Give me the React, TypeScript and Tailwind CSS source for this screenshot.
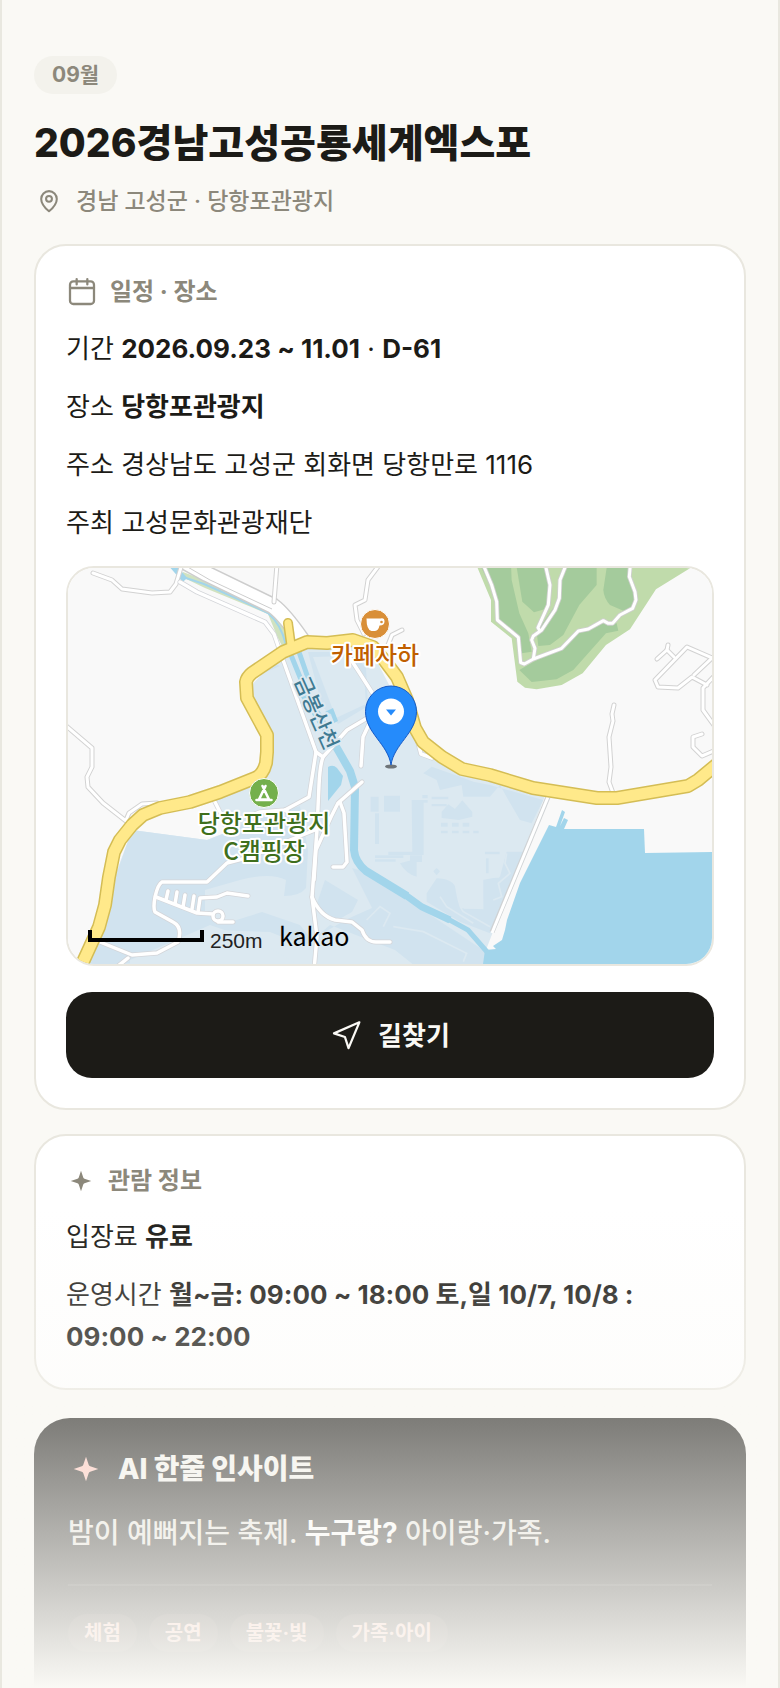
import type { ReactNode } from "react";

const TAGS = ["체험", "공연", "불꽃·빛", "가족·아이"];

// yellow trunk road that crosses the whole map
const MAIN_ROAD =
  "M78 972L83 962L99 927L105 905L109 877L114 852L120 840L132 825L143 815L160 808L190 802L220 792L255 778Q263 775 266 763L267 752V735L247 698L246 682Q247 677 252 673L283 652L307 642L327 643L353 640L373 647L385 661L397 677L407 700L415 728L423 742L442 757L462 769L490 775L533 788L597 798H617L688 786L698 780L722 760";

// small streets outside of the resort
const STREETS = [
  "M93 573L112 580L122 589L137 591L152 593L170 592L176 584L182 564",
  "M64 724L92 748V767L87 777L88 787L103 803L126 821",
  "M126 820L129 813L142 804L157 803",
  "M277 564L274 602",
  "M380 564L368 580L365 600L355 605L357 620L364 634",
  "M388 645L392 635L402 630",
  "M668 645L667 650L657 659",
  "M667 650L674 657",
  "M720 661L712 658L687 647L655 680L658 687L678 688L692 677L707 685",
  "M694 675L712 658",
  "M720 670L703 688V710L716 728",
  "M702 734L693 737V747L702 756L716 750",
  "M614 705L612 714L613 721L609 737L611 767L609 782L613 793",
];

// lanes inside of the resort
const LANES = [
  "M180 582L197 592L265 622L274 634L282 657L316 752L323 757L347 730L369 717",
  "M316 752L309 797L285 810L260 812L247 817",
  "M213 798L220 812",
  "M285 810L292 815",
  "M323 757Q320 765 319 785L317 830L312 897L317 937L314 970",
  "M314 880L316 850L331 817L338 803L362 782",
  "M340 802L344 813L347 862L343 867H333",
  "M312 897Q320 916 335 920L352 922L362 930Q366 942 376 942L390 942",
  "M361 766L363 737L370 722",
  "M348 655L375 697",
  "M407 720L416 735L421 754L432 758",
  "M315 830L290 840L250 857L227 863L207 882H162Q158 884 155 897Q153 908 155 912L173 922Q183 927 178 942L157 953L132 955L100 942",
  "M156 897L197 913L213 914",
  "M198 912L200 898L217 897L227 893L248 896",
  "M168 891L166 900",
  "M177 892L175 904",
  "M185 895L183 907",
  "M194 896L192 909",
  "M218 922L233 922",
  "M118 966L128 958",
];

function PinIcon() {
  return (
    <svg viewBox="0 0 24 24" className="size-[26px]" fill="none" stroke="currentColor" strokeWidth="1.9" strokeLinejoin="round" aria-hidden="true">
      <path d="M12 21.5s-7.2-6-7.2-11.4a7.2 7.2 0 0 1 14.4 0C19.200 15.500 12 21.500 12 21.500z" />
      <circle cx="12" cy="10" r="2.700" />
    </svg>
  );
}

function CalendarIcon() {
  return (
    <svg viewBox="0 0 24 24" className="size-8" fill="none" stroke="currentColor" strokeWidth="1.700" strokeLinecap="round" strokeLinejoin="round" aria-hidden="true">
      <rect x="3" y="4" width="18" height="17" rx="2.500" />
      <path d="M3 9h18M8 2.300v4M16 2.300v4" />
    </svg>
  );
}

function Sparkle({ className }: { className: string }) {
  return (
    <svg viewBox="0 0 24 24" className={className} fill="currentColor" aria-hidden="true">
      <path d="M12 3.800l1.800 5.400a1.600 1.600 0 0 0 1 1L20.200 12l-5.400 1.800a1.600 1.600 0 0 0-1 1L12 20.200l-1.800-5.400a1.600 1.600 0 0 0-1-1L3.800 12l5.400-1.800a1.600 1.600 0 0 0 1-1z" />
    </svg>
  );
}

function NavigationIcon() {
  return (
    <svg viewBox="0 0 24 24" className="size-8" fill="none" stroke="currentColor" strokeWidth="1.700" strokeLinejoin="round" aria-hidden="true">
      <path d="M22 2.500L3 10.800l8.200 2.700 2.700 8.300z" />
    </svg>
  );
}

function Hill() {
  return (
    <g transform="translate(390 560) scale(0.3333)">
      <path fill="#c0dbab" d="M255 0L262 22L303 120V185L365 235L382 365L405 383L440 388L515 375L578 340L648 255L720 208L798 88L940 0z" />
      <g fill="#a4cb9c">
        <path d="M268 10H363L365 60L388 160L415 220L425 275L395 280L385 230L325 185L320 120z" />
        <path d="M378 10H468L480 75L475 145L432 157L397 125z" />
        <path d="M525 10H620V75L568 135L520 225L480 255L445 258L440 215L500 130L510 60z" />
        <path d="M652 10H720L722 50L738 95L725 145L700 152L660 135Q642 115 640 90z" />
        <path d="M388 330L440 300L515 265L565 215L640 190L680 190L685 212L648 220L550 330L500 358L425 366z" />
      </g>
      {["#cfcfcf", "#fff"].map((color, i) => (
        <g key={color} fill="none" stroke={color} strokeWidth={i ? 9 : 14} strokeLinejoin="round">
          <path d="M276 5L305 75L320 125L322 180L385 232L392 308L403 312L430 297L515 265L565 213L595 207L640 182L655 190H668L690 165L728 145L738 120L735 95L718 50L722 5" />
          <path d="M430 297L435 265L425 240L430 228L455 210L495 150L508 115L510 60L530 10" />
          <path d="M450 213L444 203L475 135L480 75L465 10" />
        </g>
      ))}
    </g>
  );
}

function Resort() {
  return (
    <g>
      <path fill="#dce9f1" d="M132 830L207 840L225 833L213 798L262 770L267 735L247 690L283 652L310 644L370 648L415 735L462 769L545 796L486 950L484 970H80z" />
      <path fill="#d1e3ef" d="M132 830L207 840L225 833L236 826L300 806L308 850L306 888Q300 896 284 896L286 880Q270 872 240 880L205 890V915L230 922L262 912L300 925L312 940L345 920L372 908L352 868L366 872L486 952L484 970H420L395 950L330 925L305 946L270 932L215 930L150 962L84 966z" />
      <path fill="#dce9f1" d="M130 960L210 925L260 942L300 966H130z" />
      <path fill="#d1e3ef" d="M308 652L352 652L366 668L368 706L338 724L322 706z" />
      <path fill="#dce9f1" d="M313 657L346 656L364 676L366 704L336 718z" />
      <path fill="#d1e3ef" d="M247 675L270 662L280 666L252 678z" />
      <path fill="#d1e3ef" d="M325 880L358 900L352 912L334 922L316 906zM375 905L396 912L388 932L366 930z" />
      <g transform="translate(260 780) scale(0.3333)">
        <g fill="#d1e3ef">
          <path d="M490-20L515-40L600-10L640 5L690 15L850 60L815 130L780 120L745 60L720 15L690 50L610 50L605 15L540 30L530 0z" />
          <path d="M332 50h24v45h-24zM372 47h48v48h-48zM345 100h12v92h-12zM455 60h36v165H385v-10h72z" />
          <path d="M345 226h85v8h-85zM345 238h62v7h-62zM450 226h36v20h-36zM420 250l50-14v54q-30-6-50-40z" />
          <path d="M487 45h16v10h-16zM487 60h16v8h-16zM515 50h50v8h-50zM515 72h45v7h-45zM545 95l20-22 20 14 22-26 30 35v14l-40 10-52-6z" />
          <path d="M543 128h20v12h-20zM576 128h20v12h-20zM608 128h20v12h-20zM543 152h20v8h-20zM576 152h20v8h-20zM608 152h20v8h-20zM640 152h16v8h-16z" />
          <path d="M530 264l10 10-10 12-10-12zM675 215h44v8h-44zM678 235h8v45h-8z" />
          <path d="M500 340L530 295Q580 295 590 330L600 385L670 388L668 300L720 290L740 215L800 215L690 460L600 425L500 365z" />
        </g>
        <g fill="none" stroke="#dce9f1" strokeWidth="5">
          <path d="M585 300Q595 380 610 395L690 440M740 220L735 250L750 280L715 310L725 350L700 360M540 350L560 380L640 430" />
          <path d="M305 245L355 280M415 320L480 358M400 440L490 455L620 520L610 545M320 420L360 380L390 400L370 440" />
        </g>
        <path fill="#dce9f1" d="M612 300h58v86h-58zM688 225h30v68h-30z" />
      </g>
    </g>
  );
}

function Water() {
  return (
    <g>
      <g fill="#a2d5eb">
        <path d="M549 825L556 827L562 810L565 812L560 826L564 818L568 820L564 829H644L645 853L720 852V972H483V964L485 950L496 949L493 946L502 940L505 930L507 920L520 883L533 857z" />
        <path d="M328 767Q333 764 337 768L343 776L341 785L328 801z" />
        <path d="M325 712L333 708L338 721L334 723L331 714z" />
      </g>
      <g fill="none" stroke="#a2d5eb">
        <path strokeWidth="8" strokeLinejoin="round" d="M296 682L318 716L338 750L350 771L355 787L354 850Q355 862 366 871L407 896" />
        <path strokeWidth="7" d="M404 894L422 907L450 920" />
        <path strokeWidth="5" d="M446 918L468 930L488 953" />
        <path strokeWidth="5" d="M291 655L302 682M299 652L308 678" />
      </g>
    </g>
  );
}

function KakaoMap() {
  return (
    <svg viewBox="68 568 644 396" className="block w-full bg-[#f9f9f9]" role="img" aria-label="당항포관광지 지도">
      <path fill="#d0e2c0" d="M180 576L205 588L268 614L277 636L284 650L288 640L282 620L270 608L215 584L183 572z" />
      <path fill="none" stroke="#a2d5eb" strokeWidth="6" d="M171 564L185 580" />
      <path fill="none" stroke="#a2d5eb" strokeWidth="2" d="M180 576L204 584L238 599L268 613Q281 624 286 645" />
      <Resort />
      <Water />
      <Hill />
      <g fill="none" strokeLinejoin="round">
        <path stroke="#cdcdcd" strokeWidth="17" d="M178 558L207 574L273 606Q284 614 302 640" />
        <path stroke="#fff" strokeWidth="14" d="M178 558L207 574L273 606Q284 614 302 640" />
        <path stroke="#cdcdcd" strokeWidth="1" d="M186 566L210 580L272 609" />
      </g>
      <g fill="none" stroke="#d2d2d2" strokeWidth="5" strokeLinecap="round" strokeLinejoin="round">
        {STREETS.map((d) => <path key={d} d={d} />)}
      </g>
      <g fill="none" stroke="#fff" strokeWidth="3" strokeLinecap="round" strokeLinejoin="round">
        {STREETS.map((d) => <path key={d} d={d} />)}
      </g>
      <g fill="none" stroke="#d3d5d9" strokeWidth="5" strokeLinecap="round" strokeLinejoin="round">
        {LANES.map((d) => <path key={d} d={d} />)}
        <circle cx="218" cy="916" r="5" />
      </g>
      <g fill="none" stroke="#fff" strokeWidth="3.500" strokeLinecap="round" strokeLinejoin="round">
        {LANES.map((d) => <path key={d} d={d} />)}
        <circle cx="218" cy="916" r="5" />
      </g>
      <path fill="none" stroke="#cfd2d4" strokeWidth="5" d="M548 797L492 932" />
      <path fill="none" stroke="#fff" strokeWidth="3" d="M548 797L492 933" />
      <g fill="none" strokeLinejoin="round" strokeLinecap="round">
        <path stroke="#d4bd55" strokeWidth="10" d="M288 623L291 645" />
        <path stroke="#d4bd55" strokeWidth="14" d={MAIN_ROAD} />
        <path stroke="#ffe98a" strokeWidth="11" d={MAIN_ROAD} />
        <path stroke="#ffe98a" strokeWidth="7" d="M288 623L291 645" />
      </g>

      {/* places */}
      <circle cx="375" cy="624" r="14.500" fill="#d98f38" stroke="#fff" />
      <path fill="#fff" d="M366.500 618.500h14q4-1 4 3t-5 4q-1 5-4.500 5.500h-3.500q-5-1-5-12.500z" />
      <circle cx="381.500" cy="622" r="1.300" fill="#d98f38" />
      <circle cx="264" cy="793" r="14.500" fill="#74b04c" stroke="#fff" />
      <path fill="none" stroke="#fff" strokeWidth="2.600" strokeLinejoin="round" strokeLinecap="round" d="M262.500 786L269 799.500H259L265.500 786M256.500 800H271.500" />
      <g className="font-['Noto_Sans_CJK_KR',sans-serif] font-medium" textAnchor="middle" stroke="#fff" strokeWidth="4" strokeLinejoin="round" paintOrder="stroke">
        <text x="375" y="664" fontSize="24" fill="#c05f00">카페자하</text>
        <text x="264" y="832" fontSize="24" fill="#3f6f1c">당항포관광지</text>
        <text x="264" y="860" fontSize="24" fill="#3f6f1c">C캠핑장</text>
        <text x="0" y="7" fontSize="21" fill="#3f7a92" stroke="#dce9f1" transform="translate(316 713) rotate(66)">금봉산천</text>
      </g>

      <ellipse cx="391" cy="766.500" rx="6" ry="2" fill="#000" opacity="0.500" />
      <path fill="#258bfb" stroke="#1559c4" d="M391 765C388 744 365.500 733 365.500 711.500a25.500 25.500 0 0 1 51 0C416.500 733 394 744 391 765z" />
      <circle cx="391" cy="711.500" r="13" fill="#fff" />
      <path fill="#258bfb" d="M386 709.500h10l-5 6z" />

      {/* scale */}
      <path fill="none" stroke="#000" strokeWidth="4" d="M90 930V940H202V930" />
      <text x="210" y="948" fontSize="21" fill="#222" className="font-['Liberation_Sans',sans-serif] font-normal">250m</text>
      <text x="279" y="946" fontSize="25" fill="#000" className="font-['Noto_Sans_CJK_KR',sans-serif] font-normal">kakao</text>
    </svg>
  );
}

function Card({ icon, title, children }: { icon: ReactNode; title: string; children: ReactNode }) {
  return (
    <section className="rounded-[32px] border-2 border-[#e9e7df] bg-white p-[30px]">
      <h2 className="mb-5 flex items-center gap-3 text-[24px] leading-[30px] font-bold text-[#8c887b]">
        {icon}
        {title}
      </h2>
      {children}
    </section>
  );
}

function Row({ label, children }: { label: string; children: ReactNode }) {
  return (
    <p className="text-[26px] leading-[42px]">
      {label} {children}
    </p>
  );
}

export default function App() {
  return (
    <main className="relative h-screen overflow-hidden border-x-2 border-[#e9e8e0] bg-[#faf9f5] px-8 pt-14 font-[Inter,'Noto_Sans_CJK_KR',sans-serif] text-[#1c1b17]">
      <span className="inline-flex h-[38px] items-center rounded-full bg-[#f3f2ec] px-[18px] align-top text-[21px] font-bold text-[#8c887b]">
        09월
      </span>
      <h1 className="mt-6 text-[39px] leading-[50px] font-extrabold">2026경남고성공룡세계엑스포</h1>
      <p className="mt-4 flex items-center gap-[14px] pl-[2px] text-[23px] leading-[34px] font-medium text-[#8c887b]">
        <PinIcon />
        경남 고성군 · 당항포관광지
      </p>

      <div className="mt-[26px] flex flex-col gap-6">
        <Card icon={<CalendarIcon />} title="일정 · 장소">
          <div className="flex flex-col gap-4">
            <Row label="기간">
              <b>2026.09.23 ~ 11.01</b> · <b>D-61</b>
            </Row>
            <Row label="장소">
              <b>당항포관광지</b>
            </Row>
            <Row label="주소">경상남도 고성군 회화면 당항만로 1116</Row>
            <Row label="주최">고성문화관광재단</Row>
          </div>
          <div className="mt-[22px] overflow-hidden rounded-[28px] border-2 border-[#e9e7df]">
            <KakaoMap />
          </div>
          <button type="button" className="mt-[26px] flex h-[86px] w-full items-center justify-center gap-4 rounded-[26px] bg-[#1c1b17] text-[26px] font-bold text-[#faf9f5]">
            <NavigationIcon />
            길찾기
          </button>
        </Card>

        <Card icon={<Sparkle className="size-[30px]" />} title="관람 정보">
          <div className="flex flex-col gap-4">
            <Row label="입장료">
              <b>유료</b>
            </Row>
            <Row label="운영시간">
              <b>월~금: 09:00 ~ 18:00 토,일 10/7, 10/8 : 09:00 ~ 22:00</b>
            </Row>
          </div>
        </Card>
      </div>

      <section className="mt-7 rounded-[36px] bg-[#1c1b17] p-[34px] text-[28px] text-[#e5e3dc]">
        <h2 className="flex h-[34px] items-center gap-[14px] font-extrabold text-[#f3f2ec]">
          <Sparkle className="size-9 text-[#ffc2b6]" />
          AI 한줄 인사이트
        </h2>
        <p className="mt-6 leading-[46px] font-medium">
          밤이 예뻐지는 축제. <b className="text-white">누구랑?</b> 아이랑·가족.
        </p>
        <ul className="mt-7 flex gap-3 border-t-2 border-white/10 pt-7 pb-20">
          {TAGS.map((tag) => (
            <li key={tag} className="flex h-[38px] items-center rounded-full bg-[#ffc2b6]/10 px-4 text-[20px] leading-[28px] font-bold text-[#ffc2b6]">
              {tag}
            </li>
          ))}
        </ul>
      </section>

      {/* fade out to the page colour */}
      <div className="pointer-events-none absolute inset-x-0 bottom-0 h-[480px] bg-linear-to-b from-[#faf9f5]/0 to-[#faf9f5]" />
    </main>
  );
}
